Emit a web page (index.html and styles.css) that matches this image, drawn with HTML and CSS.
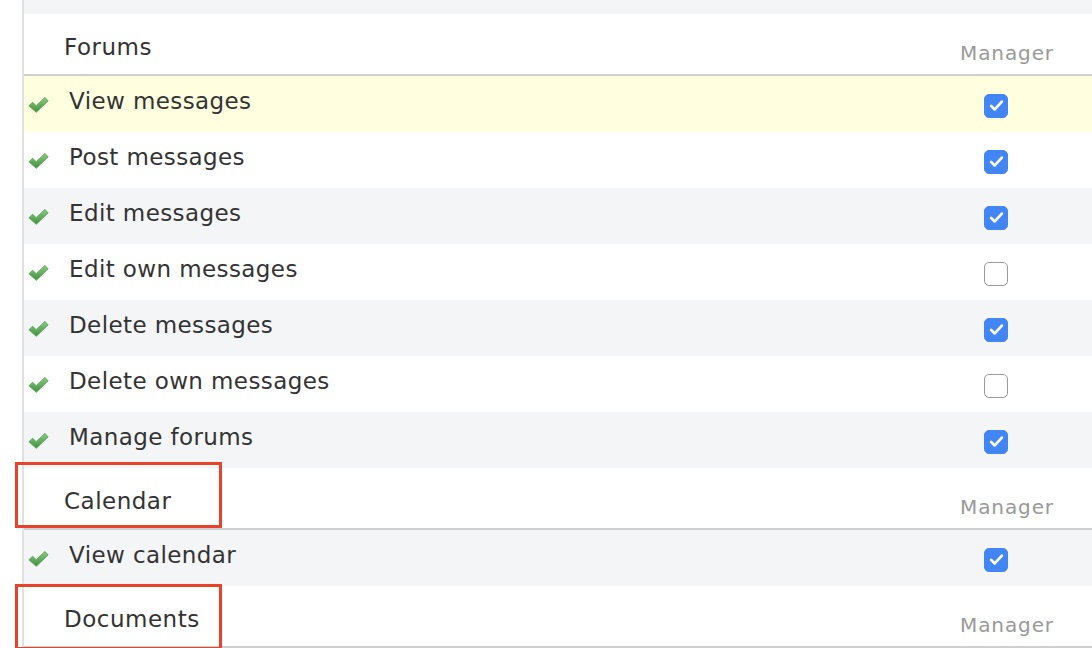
FILE: index.html
```html
<!DOCTYPE html>
<html lang="en">
<head>
    <meta charset="UTF-8">
    <title>Permissions</title>
    <link rel="stylesheet" href="styles.css">
</head>
<body>

    <div class="page">
        <div class="perm-table">
            <div class="top-band"></div>

            <!-- Forums -->
            <div class="group-head">
                <div class="group-name">Forums</div>
                <div class="role">Manager</div>
            </div>
            <div class="perm-row hilite">
                <span class="ok"><svg viewBox="0 0 20 16"><use href="#tick"/></svg></span>
                <span class="label">View messages</span>
                <span class="cell"><span class="cb on"><svg viewBox="0 0 16 16"><path d="M3.5 8.3l3 3 6-6.6"/></svg></span></span>
            </div>
            <div class="perm-row">
                <span class="ok"><svg viewBox="0 0 20 16"><use href="#tick"/></svg></span>
                <span class="label">Post messages</span>
                <span class="cell"><span class="cb on"><svg viewBox="0 0 16 16"><path d="M3.5 8.3l3 3 6-6.6"/></svg></span></span>
            </div>
            <div class="perm-row alt">
                <span class="ok"><svg viewBox="0 0 20 16"><use href="#tick"/></svg></span>
                <span class="label">Edit messages</span>
                <span class="cell"><span class="cb on"><svg viewBox="0 0 16 16"><path d="M3.5 8.3l3 3 6-6.6"/></svg></span></span>
            </div>
            <div class="perm-row">
                <span class="ok"><svg viewBox="0 0 20 16"><use href="#tick"/></svg></span>
                <span class="label">Edit own messages</span>
                <span class="cell"><span class="cb"></span></span>
            </div>
            <div class="perm-row alt">
                <span class="ok"><svg viewBox="0 0 20 16"><use href="#tick"/></svg></span>
                <span class="label">Delete messages</span>
                <span class="cell"><span class="cb on"><svg viewBox="0 0 16 16"><path d="M3.5 8.3l3 3 6-6.6"/></svg></span></span>
            </div>
            <div class="perm-row">
                <span class="ok"><svg viewBox="0 0 20 16"><use href="#tick"/></svg></span>
                <span class="label">Delete own messages</span>
                <span class="cell"><span class="cb"></span></span>
            </div>
            <div class="perm-row alt">
                <span class="ok"><svg viewBox="0 0 20 16"><use href="#tick"/></svg></span>
                <span class="label">Manage forums</span>
                <span class="cell"><span class="cb on"><svg viewBox="0 0 16 16"><path d="M3.5 8.3l3 3 6-6.6"/></svg></span></span>
            </div>

            <!-- Calendar -->
            <div class="group-head">
                <div class="group-name">Calendar</div>
                <div class="role">Manager</div>
                <span class="mark mark-calendar"></span>
            </div>
            <div class="perm-row alt">
                <span class="ok"><svg viewBox="0 0 20 16"><use href="#tick"/></svg></span>
                <span class="label">View calendar</span>
                <span class="cell"><span class="cb on"><svg viewBox="0 0 16 16"><path d="M3.5 8.3l3 3 6-6.6"/></svg></span></span>
            </div>

            <!-- Documents -->
            <div class="group-head">
                <div class="group-name">Documents</div>
                <div class="role">Manager</div>
                <span class="mark mark-documents"></span>
            </div>
        </div>
    </div>

    <!-- green tick used in every row -->
    <svg class="defs" width="0" height="0">
        <defs>
            <linearGradient id="tickGrad" x1="0" y1="0" x2="0" y2="1">
                <stop offset="0" stop-color="#8acb80"/>
                <stop offset="1" stop-color="#3f9140"/>
            </linearGradient>
            <path id="tick" d="M0.8 8.8 L4.4 5.4 L7.8 8.6 L16.2 0.8 L19.2 4.2 L7.9 15 Z" fill="url(#tickGrad)" stroke="#57a253" stroke-width="0.8" stroke-linejoin="round"/>
        </defs>
    </svg>

</body>
</html>
```

FILE: styles.css
```css
/* Gaya umum */
* {
    margin: 0;
    padding: 0;
    box-sizing: border-box;
}

body {
    background: #fff;
    font-family: "DejaVu Sans", Verdana, sans-serif;
    color: #333;
    overflow: hidden;
}

.page {
    padding-left: 22px;
}

.perm-table {
    border-left: 2px solid #e1e1e1;
    height: 648px;
}

.top-band {
    height: 14px;
    background: #f4f5f7;
}

/* Header tiap grup */
.group-head {
    position: relative;
    display: flex;
    align-items: flex-start;
    height: 62px;
    background: #fff;
    border-bottom: 2px solid #cfcfcf;
}

.group-name {
    flex: 1;
    padding: 20px 0 0 40px;
    font-size: 23px;
    line-height: 26px;
    letter-spacing: 0.5px;
}

.role {
    width: 152px;
    padding: 27px 0 0 20px;
    font-size: 20px;
    line-height: 24px;
    color: #999;
    letter-spacing: 0.9px;
}

/* Kotak merah penanda */
.mark {
    position: absolute;
    left: -9px;
    width: 207px;
    border: 3px solid #e8432a;
    pointer-events: none;
}

.mark-calendar {
    top: -6px;
    height: 66px;
}

.mark-documents {
    top: -2px;
    height: 66px;
}

/* Baris izin */
.perm-row {
    display: flex;
    align-items: center;
    height: 56px;
    background: #fff;
}

.perm-row.alt {
    background: #f4f5f7;
}

.perm-row.hilite {
    background: #ffffe0;
}

.ok {
    width: 45px;
    padding-left: 4px;
    padding-top: 2px;
    display: flex;
    align-items: center;
}

.ok svg {
    width: 21px;
    height: 18px;
    display: block;
}

.label {
    flex: 1;
    font-size: 23px;
    line-height: 26px;
    padding-bottom: 6px;
    letter-spacing: 0.4px;
}

.cell {
    width: 152px;
    padding-left: 44px;
    padding-top: 3px;
    display: flex;
    align-items: center;
}

/* Checkbox */
.cb {
    width: 24px;
    height: 24px;
    border: 1.5px solid #9b9b9b;
    border-radius: 5px;
    background: #fff;
    display: flex;
    align-items: center;
    justify-content: center;
}

.cb.on {
    background: #4285f4;
    border-color: #4285f4;
}

.cb svg {
    width: 19px;
    height: 19px;
}

.cb svg path {
    fill: none;
    stroke: #fff;
    stroke-width: 2.3;
    stroke-linecap: round;
    stroke-linejoin: round;
}

.defs {
    position: absolute;
}
```
